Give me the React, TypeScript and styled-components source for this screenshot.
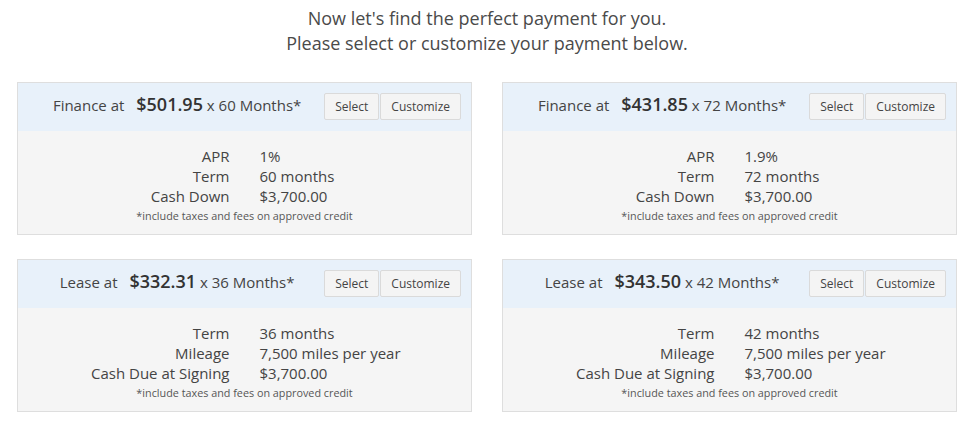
import React from "react";
import styled, { createGlobalStyle } from "styled-components";

const Global = createGlobalStyle`
  html, body { margin: 0; padding: 0; background: #fff; }
  body { font-family: "Open Sans", "Noto Sans", sans-serif; color: #444; }
`;

const Page = styled.div`
  width: 975px;
  padding: 6px 18px 0 17px;
  box-sizing: border-box;
`;

const Title = styled.h1`
  margin: 0;
  font-weight: 400;
  font-size: 18px;
  line-height: 25px;
  text-align: center;
  color: #4a4a4a;
`;

const Grid = styled.div`
  margin-top: 26px;
  display: grid;
  grid-template-columns: 1fr 1fr;
  column-gap: 30px;
  row-gap: 24px;
`;

const Card = styled.div`
  border: 1px solid #dedede;
  background: #f5f5f5;
`;

const Header = styled.div`
  height: 48px;
  background: #e8f1fa;
  display: flex;
  align-items: center;
  padding-right: 10px;
`;

const Headline = styled.div`
  flex: 1;
  text-align: center;
  padding-left: 12px;
  font-size: 15px;
  color: #444;
  margin-top: -7px;
  white-space: nowrap;
`;

const Price = styled.span`
  font-weight: 600;
  font-size: 18px;
  color: #333;
  margin-left: 8px;
`;

const Buttons = styled.div`
  display: flex;
  margin-top: -1px;
`;

const Btn = styled.button`
  font-family: inherit;
  font-size: 12px;
  color: #444;
  height: 27px;
  padding: 0 10px;
  background: #f4f4f4;
  border: 1px solid #dadada;
  border-radius: 2px;
  & + & { margin-left: 1px; }
`;

const Body = styled.div`
  padding: 15px 0 10px;
`;

const Row = styled.div`
  display: grid;
  grid-template-columns: 1fr 1fr;
  font-size: 15px;
  line-height: 20px;
  color: #444;
`;

const Label = styled.div`
  text-align: right;
  padding-right: 15px;
`;

const Value = styled.div`
  text-align: left;
  padding-left: 15px;
`;

const Note = styled.div`
  margin-top: 2px;
  text-align: center;
  font-size: 10.8px;
  line-height: 16px;
  color: #555;
`;

type Offer = {
  kind: string;
  price: string;
  months: number;
  rows: [string, string][];
};

const offers: Offer[] = [
  { kind: "Finance", price: "$501.95", months: 60, rows: [["APR", "1%"], ["Term", "60 months"], ["Cash Down", "$3,700.00"]] },
  { kind: "Finance", price: "$431.85", months: 72, rows: [["APR", "1.9%"], ["Term", "72 months"], ["Cash Down", "$3,700.00"]] },
  { kind: "Lease", price: "$332.31", months: 36, rows: [["Term", "36 months"], ["Mileage", "7,500 miles per year"], ["Cash Due at Signing", "$3,700.00"]] },
  { kind: "Lease", price: "$343.50", months: 42, rows: [["Term", "42 months"], ["Mileage", "7,500 miles per year"], ["Cash Due at Signing", "$3,700.00"]] },
];

export default function App() {
  return (
    <>
      <Global />
      <Page>
        <Title>
          Now let's find the perfect payment for you.
          <br />
          Please select or customize your payment below.
        </Title>
        <Grid>
          {offers.map((o, i) => (
            <Card key={i}>
              <Header>
                <Headline>
                  {o.kind} at <Price>{o.price}</Price> x {o.months} Months*
                </Headline>
                <Buttons>
                  <Btn>Select</Btn>
                  <Btn>Customize</Btn>
                </Buttons>
              </Header>
              <Body>
                {o.rows.map(([l, v]) => (
                  <Row key={l}>
                    <Label>{l}</Label>
                    <Value>{v}</Value>
                  </Row>
                ))}
                <Note>*include taxes and fees on approved credit</Note>
              </Body>
            </Card>
          ))}
        </Grid>
      </Page>
    </>
  );
}
